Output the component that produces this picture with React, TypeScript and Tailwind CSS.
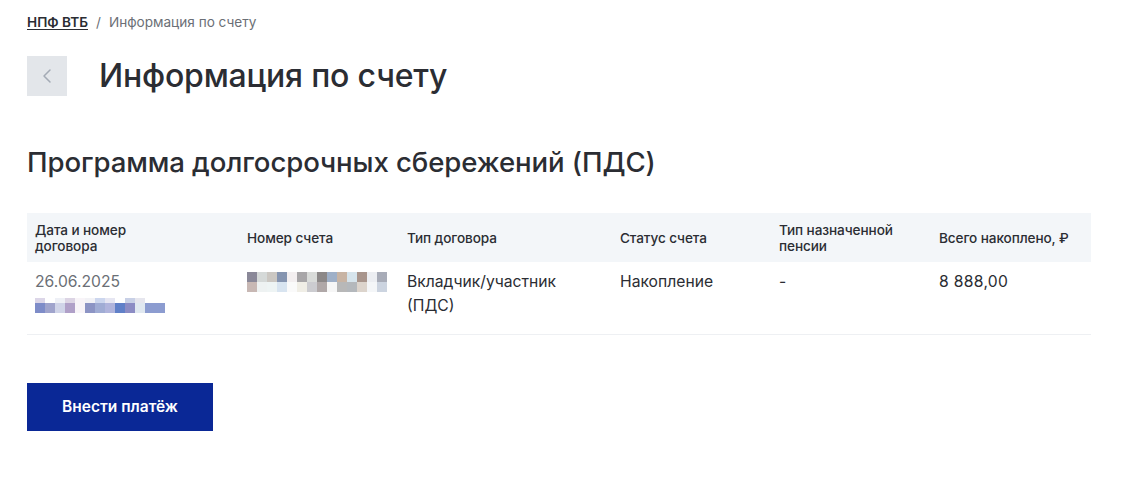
import { ChevronLeft } from "lucide-react";

// Пиксельная «маска» скрытых данных.
const maskAccount = [
  ["#8a8898", "#d5d9d8", "#cbc7c2", "#8594b0", "#f3eff0", "#a8a6a8", "#d9dbd9", "#8c8888", "#9fb0c8", "#c8b4a4", "#d6e4ec", "#a8958c", "#eceef2", "#a8acb8"],
  ["#c8b8b4", "#eef2f2", "#eef4f4", "#d8e4f0", "#fafafa", "#f0eee6", "#ccccd0", "#b0a8a8", "#f6f6f6", "#b8b8b8", "#b4b8bc", "#dcd4cc", "#f4f6f8", "#ccd4e0"],
];

const maskContract = [
  ["#dcd6e8", "#ffffff", "#eef0f6", "#dcd4e4", "#f8f4f8", "#f2f2f6", "#ccd6ee", "#e6e6f2", "#ffffff", "#c8d0e6", "#e6e6ee", "#ffffff", "#ffffff"],
  ["#7e8cc8", "#a0a4cc", "#d0d4e8", "#b0a0c8", "#f8f4f8", "#8c94c4", "#a0acd4", "#b0b4dc", "#6080c8", "#8c8cc4", "#e0e8f0", "#8c9cd0", "#8c9cd0"],
];

function Mask({ rows, heights }: { rows: string[][]; heights: number[] }) {
  return (
    <div className="flex flex-col">
      {rows.map((row, i) => (
        <div key={i} className="flex">
          {row.map((c, j) => (
            <div key={j} className="w-[10px]" style={{ background: c, height: heights[i] }} />
          ))}
        </div>
      ))}
    </div>
  );
}

export default function App() {
  return (
    <div className="min-h-[492px] bg-white px-[27px] pt-[13px] font-['Inter','Noto_Sans',sans-serif] text-[#2b2d33]">
      <div className="flex items-center gap-[8px] text-[13.6px] leading-[18px]">
        <span className="font-semibold underline underline-offset-2">НПФ ВТБ</span>
        <span className="text-[#6b6f76]">/</span>
        <span className="text-[#6b6f76]">Информация по счету</span>
      </div>

      <div className="mt-[25px] flex items-center gap-[32px]">
        <button className="flex h-[40px] w-[40px] items-center justify-center bg-[#e3e6ea] text-[#a3aab5]">
          <ChevronLeft size={24} strokeWidth={1.5} />
        </button>
        <h1 className="text-[32px] font-medium leading-[40px] tracking-[-0.2px]">Информация по счету</h1>
      </div>

      <h2 className="mt-[48px] text-[27.6px] font-medium leading-[36px] tracking-[-0.1px]">
        Программа долгосрочных сбережений (ПДС)
      </h2>

      <table className="mt-[33px] w-[1064px] table-fixed border-collapse">
        <colgroup>
          <col className="w-[212px]" />
          <col className="w-[160px]" />
          <col className="w-[213px]" />
          <col className="w-[159px]" />
          <col className="w-[160px]" />
          <col className="w-[160px]" />
        </colgroup>
        <thead>
          <tr className="h-[49px] bg-[#f3f6f9] text-left text-[13.6px] font-medium leading-[16px] tracking-[-0.1px]">
            <th className="px-[8px] font-medium">Дата и номер<br />договора</th>
            <th className="px-[8px] font-medium">Номер счета</th>
            <th className="px-[8px] font-medium">Тип договора</th>
            <th className="px-[8px] font-medium">Статус счета</th>
            <th className="px-[8px] font-medium">Тип назначенной<br />пенсии</th>
            <th className="px-[8px] font-medium">Всего накоплено, ₽</th>
          </tr>
        </thead>
        <tbody>
          <tr className="border-b border-[#eef0f3] align-top text-[15.7px] leading-[24px]">
            <td className="px-[8px] pb-[16px] pt-[8px]">
              <div className="text-[#6b6f76]">26.06.2025</div>
              <div className="mt-[4px]">
                <Mask rows={maskContract} heights={[5, 10]} />
              </div>
            </td>
            <td className="px-[8px] pt-[10px]">
              <Mask rows={maskAccount} heights={[10, 10]} />
            </td>
            <td className="px-[8px] pb-[16px] pt-[8px]">Вкладчик/участник<br />(ПДС)</td>
            <td className="px-[8px] pt-[8px]">Накопление</td>
            <td className="px-[8px] pt-[8px]">-</td>
            <td className="px-[8px] pt-[8px] tracking-[0.3px]">8 888,00</td>
          </tr>
        </tbody>
      </table>

      <button className="mt-[48px] h-[48px] w-[186px] bg-[#0a2896] text-[15.5px] font-semibold text-white">
        Внести платёж
      </button>
    </div>
  );
}
